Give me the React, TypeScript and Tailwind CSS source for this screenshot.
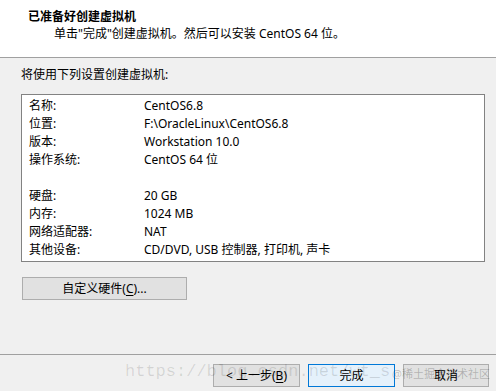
import React from "react";

const rows1: [string, string][] = [
  ["名称:", "CentOS6.8"],
  ["位置:", "F:\\OracleLinux\\CentOS6.8"],
  ["版本:", "Workstation 10.0"],
  ["操作系统:", "CentOS 64 位"],
];
const rows2: [string, string][] = [
  ["硬盘:", "20 GB"],
  ["内存:", "1024 MB"],
  ["网络适配器:", "NAT"],
  ["其他设备:", "CD/DVD, USB 控制器, 打印机, 声卡"],
];

function Row({ l, v }: { l: string; v: string }) {
  return (
    <div className="flex h-[18px] items-center">
      <div className="w-[115px] shrink-0">{l}</div>
      <div className="whitespace-nowrap">{v}</div>
    </div>
  );
}

export default function App() {
  return (
    <div
      className="relative flex h-[391px] w-[496px] flex-col overflow-hidden bg-[#f0f0f0] text-[12px] text-black"
      style={{ fontFamily: '"Noto Sans", "Noto Sans CJK SC", sans-serif' }}
    >
      <div className="h-[58px] shrink-0 border-b border-[#a0a0a0] bg-white pt-[9px]">
        <div className="pl-[28px] text-[12px] font-bold leading-[16px]">已准备好创建虚拟机</div>
        <div className="mt-[1px] pl-[54px] leading-[16px]">单击"完成"创建虚拟机。然后可以安装 CentOS 64 位。</div>
      </div>
      <div className="mt-[9px] pl-[21px] leading-[16px]">将使用下列设置创建虚拟机:</div>
      <div className="ml-[21px] mt-[11px] h-[168px] w-[464px] border border-[#828282] bg-white pl-[7px] pt-[2px]">
        {rows1.map(([l, v]) => (
          <Row key={l} l={l} v={v} />
        ))}
        <div className="h-[18px]" />
        {rows2.map(([l, v]) => (
          <Row key={l} l={l} v={v} />
        ))}
      </div>
      <div className="ml-[22px] mt-[15px] flex h-[23px] w-[165px] items-center justify-center border border-[#adadad] bg-[#e1e1e1]">
        自定义硬件(<span className="underline underline-offset-2">C</span>)...
      </div>
      <div className="mt-[54px] h-0 border-t border-[#a0a0a0]" />
      <div className="mt-[9px] flex justify-end gap-[8px] pr-[7px]">
        <div className="flex h-[23px] w-[87px] items-center justify-center border border-[#adadad] bg-[#e1e1e1]">
          &lt; 上一步(<span className="underline underline-offset-2">B</span>)
        </div>
        <div className="flex h-[23px] w-[87px] items-center justify-center border border-[#0078d7] bg-[#e5f1fb]">
          完成
        </div>
        <div className="flex h-[23px] w-[86px] items-center justify-center border border-[#adadad] bg-[#e1e1e1]">
          取消
        </div>
      </div>
      <div
        className="pointer-events-none absolute left-[125px] top-[362px] whitespace-nowrap text-[17px] leading-[20px] text-[rgba(0,0,0,0.12)]"
        style={{ fontFamily: '"Liberation Mono", monospace' }}
      >
        https://blog.csdn.net/wt_s
      </div>
      <div className="pointer-events-none absolute left-[392px] top-[367px] whitespace-nowrap text-[11px] leading-[14px] text-[rgba(0,0,0,0.22)]">
        @稀土掘金技术社区
      </div>
    </div>
  );
}
